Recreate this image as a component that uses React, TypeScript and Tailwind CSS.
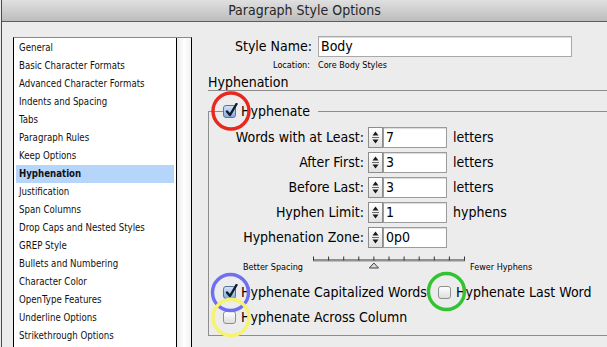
import clsx from "clsx";

const categories = [
  "General",
  "Basic Character Formats",
  "Advanced Character Formats",
  "Indents and Spacing",
  "Tabs",
  "Paragraph Rules",
  "Keep Options",
  "Hyphenation",
  "Justification",
  "Span Columns",
  "Drop Caps and Nested Styles",
  "GREP Style",
  "Bullets and Numbering",
  "Character Color",
  "OpenType Features",
  "Underline Options",
  "Strikethrough Options",
];

const fields = [
  { label: "Words with at Least:", value: "7", unit: "letters" },
  { label: "After First:", value: "3", unit: "letters" },
  { label: "Before Last:", value: "3", unit: "letters" },
  { label: "Hyphen Limit:", value: "1", unit: "hyphens" },
  { label: "Hyphenation Zone:", value: "0p0", unit: "" },
];

function Checkbox({ checked }: { checked?: boolean }) {
  return (
    <span
      className={clsx(
        "relative block h-[13px] w-[13px] shrink-0 rounded-[3px] border",
        checked
          ? "border-[#56739c] bg-gradient-to-b from-[#d3e3f7] to-[#86acdd]"
          : "border-[#8e8e8e] bg-gradient-to-b from-white to-[#dedede]"
      )}
    >
      {checked && (
        <svg className="absolute left-[1px] top-[-3px]" width="13" height="14" viewBox="0 0 13 14">
          <path d="M2 8.5 L5 12 L11.5 1" fill="none" stroke="#111a2a" strokeWidth="2.4" strokeLinecap="round" strokeLinejoin="round" />
        </svg>
      )}
    </span>
  );
}

function Stepper() {
  return (
    <span className="block h-[21px] w-[15px] shrink-0 border border-[#8c8c8c] bg-gradient-to-b from-white to-[#e2e2e2]">
      <svg width="13" height="19" viewBox="0 0 13 19">
        <path d="M6.5 3.5 L9.5 7.5 H3.5Z" fill="#1a1a1a" />
        <line x1="3" x2="10" y1="9.5" y2="9.5" stroke="#6a6a6a" />
        <path d="M6.5 15.5 L9.5 11.5 H3.5Z" fill="#1a1a1a" />
      </svg>
    </span>
  );
}

function Ruler() {
  const ticks = Array.from({ length: 11 }, (_, i) => 0.5 + i * 15.1);
  return (
    <svg width="153" height="14" viewBox="0 0 153 14" className="block">
      <line x1="0" x2="152" y1="5" y2="5" stroke="#333" strokeWidth="1.2" />
      <line x1="0" x2="152" y1="6.2" y2="6.2" stroke="#9a9a9a" strokeWidth="0.8" />
      {ticks.map((x) => (
        <line key={x} x1={x} x2={x} y1="1.5" y2="5.5" stroke="#333" strokeWidth="1" />
      ))}
      <path d="M60.9 8 L65.5 13 H56.3Z" fill="#d8d8d8" stroke="#444" strokeWidth="1" strokeLinejoin="round" />
    </svg>
  );
}

export default function App() {
  return (
    <div className="relative h-[347px] w-[607px] overflow-hidden bg-[#ececec] pl-px font-['DejaVu_Sans_Condensed','DejaVu_Sans',sans-serif] text-black">
      <div className="flex h-full flex-col border-l border-[#4a4a4a]">
        <div className="flex h-[22px] shrink-0 items-center justify-center border-b border-[#5c5c5c] bg-gradient-to-b from-[#e0e0e0] to-[#bdbdbd] text-[14px] text-[#262626]">
          Paragraph Style Options
        </div>

        <div className="flex min-h-0 flex-1">
          {/* category list */}
          <div className="ml-[11px] mt-[15px] flex h-[320px] w-[179px] shrink-0 border border-black border-t-[#8a8a8a] bg-white">
            <ul className="flex-1 pt-px">
              {categories.map((c) => (
                <li
                  key={c}
                  className={clsx(
                    "mx-[2px] h-[18px] pl-[3px] text-[9.6px] leading-[18px] text-[#111]",
                    c === "Hyphenation" && "bg-[#b5d5fb] font-bold"
                  )}
                >
                  {c}
                </li>
              ))}
            </ul>
            <div className="w-[15px] border-l border-black bg-gradient-to-r from-[#eaeaea] via-white to-[#f2f2f2]" />
          </div>

          {/* options */}
          <div className="flex min-w-0 flex-1 flex-col pl-[16px] text-[14px]">
            <div className="mt-[14px] flex h-[21px] items-center">
              <span className="w-[104px] text-right">Style Name:</span>
              <span className="ml-[6px] flex h-[21px] w-[254px] items-center border border-[#a9a9a9] bg-white pl-[2px] shadow-[inset_0_1px_1px_rgba(0,0,0,0.15)]">
                Body
              </span>
            </div>
            <div className="mt-[3px] flex h-[12px] items-center text-[9px]">
              <span className="w-[102px] text-right">Location:</span>
              <span className="ml-[8px]">Core Body Styles</span>
            </div>
            <div className="mt-[2px] h-[17px] border-b border-[#8d8d8d] leading-[16px]">Hyphenation</div>

            <fieldset className="mt-[12px] border border-r-0 border-[#8d8d8d] pb-[5px]">
              <legend className="ml-[14px] flex h-[16px] items-center gap-[5px] pr-[8px]">
                <Checkbox checked />
                <span>Hyphenate</span>
              </legend>

              <div className="mt-[6px] flex flex-col">
                {fields.map((f) => (
                  <div key={f.label} className="flex h-[25px] items-center">
                    <span className="w-[155px] text-right">{f.label}</span>
                    <span className="ml-[4px] flex">
                      <Stepper />
                      <span className="flex h-[21px] w-[64px] items-center border border-[#9c9c9c] bg-white pl-[2px] shadow-[inset_0_1px_1px_rgba(0,0,0,0.15)]">
                        {f.value}
                      </span>
                    </span>
                    {f.unit && <span className="ml-[6px]">{f.unit}</span>}
                  </div>
                ))}
              </div>

              <div className="mt-[5px] flex h-[25px] items-start">
                <span className="w-[104px] pl-[34px] pt-[7px] text-[9px] leading-[11px]">Better Spacing</span>
                <Ruler />
                <span className="ml-[4px] pt-[7px] text-[9px] leading-[11px]">Fewer Hyphens</span>
              </div>

              <div className="flex h-[25px] items-center">
                <span className="flex w-[229px] items-center gap-[5px] pl-[14px]">
                  <Checkbox checked />
                  <span>Hyphenate Capitalized Words</span>
                </span>
                <span className="flex items-center gap-[5px]">
                  <Checkbox />
                  <span>Hyphenate Last Word</span>
                </span>
              </div>
              <div className="flex h-[25px] items-center gap-[5px] pl-[14px]">
                <Checkbox />
                <span>Hyphenate Across Column</span>
              </div>
            </fieldset>
          </div>
        </div>
      </div>

      {/* annotation circles */}
      <svg className="pointer-events-none absolute inset-0" width="607" height="347" viewBox="0 0 607 347">
        <circle cx="231" cy="111" r="18" fill="none" stroke="#e8281e" strokeWidth="3.4" />
        <circle cx="230.5" cy="292.5" r="18" fill="none" stroke="#6f6ff2" strokeWidth="3.4" />
        <circle cx="446.5" cy="291.5" r="18" fill="none" stroke="#33c233" strokeWidth="3.4" />
        <circle cx="231" cy="317.5" r="18" fill="none" stroke="#f6f36c" strokeWidth="3.4" />
      </svg>
    </div>
  );
}
